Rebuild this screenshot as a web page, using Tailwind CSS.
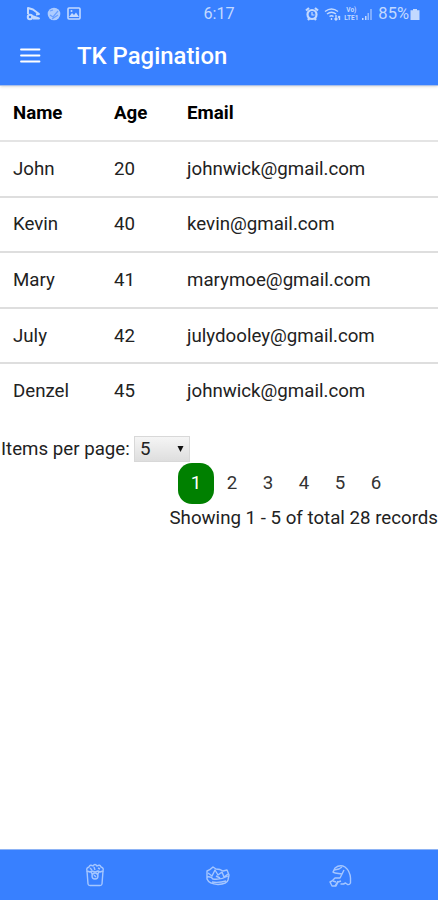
<!DOCTYPE html>
<html lang="en">
<head>
    <meta charset="UTF-8">
    <meta name="viewport" content="width=device-width, initial-scale=1.0">
    <title>TK Pagination</title>
    <script src="https://cdn.jsdelivr.net/npm/@tailwindcss/browser@4"></script>
</head>
<body class="bg-white text-[#222] font-['Roboto',sans-serif] text-[18.7px] h-screen flex flex-col overflow-hidden">

    <!-- Header -->
    <header class="h-[86px] shrink-0 bg-[#3880ff] text-white border-b border-[#a9bfe8] shadow-sm">
        <div class="h-7 flex items-center justify-between pl-[26px] pr-[18px] text-[#c3d9ff] relative">
            <div class="flex items-center gap-[6px] pb-px">
                <svg class="w-[15px] h-[15px]" viewBox="0 0 15 15" fill="none" stroke="currentColor" stroke-width="2" stroke-linejoin="round">
                    <path d="M2 8V2l5 1.500 6 4.500-3 .500M6 10l7 2.500H7"/>
                    <circle cx="4" cy="11" r="2.200"/>
                </svg>
                <svg class="w-[14px] h-[14px]" viewBox="0 0 14 14">
                    <circle cx="7" cy="7" r="6.300" fill="currentColor" opacity=".85"/>
                    <path d="M3 8l3 2 5-6M5 12l6-4M3 4l3-1" fill="none" stroke="#6a9fff" stroke-width="1.200"/>
                </svg>
                <svg class="w-[14px] h-[13px]" viewBox="0 0 14 13">
                    <rect x="1" y="1" width="12" height="11" rx="1" fill="none" stroke="currentColor" stroke-width="1.600"/>
                    <path d="M2 10l3-4 2 2 2-2.500 3 4.500z" fill="currentColor"/>
                    <circle cx="4.500" cy="4" r="1" fill="currentColor"/>
                </svg>
            </div>
            <span class="absolute left-[203.5px] top-[3px] text-[16.200px] leading-[22px]">6:17</span>
            <div class="flex items-center">
                <svg class="w-[14px] h-[14px] mr-[5px]" viewBox="0 0 14 14" fill="none" stroke="currentColor">
                    <circle cx="7" cy="7.500" r="4.500" stroke-width="2.200"/>
                    <path d="M1 3.500L4 1M10 1l3 2.500M3 13l1.500-2M11 13l-1.500-2" stroke-width="2.200"/>
                    <path d="M7 5v3h2.500" stroke-width="1.200"/>
                </svg>
                <svg class="w-[17px] h-[14px] mr-[2px]" viewBox="0 0 17 14" fill="none" stroke="currentColor" stroke-width="1.400">
                    <path d="M1 4.500q6.500-5 13 0M3 7q4.500-3.500 9 0M5.500 9.500q2-1.500 4 0"/>
                    <path d="M7.500 11v2M12 8v5M10.500 11.500L12 13l1.500-1.500M15.500 13V9M14 10.500L15.500 9"/>
                </svg>
                <span class="w-[16px] h-[16px] mr-[2px] flex flex-col items-center text-[6.500px] leading-[8px] font-bold"><span>Vo)</span><span>LTE1</span></span>
                <svg class="w-[12px] h-[13px] mr-[5px]" viewBox="0 0 12 13" fill="currentColor">
                    <rect x="1" y="10" width="1.500" height="2"/>
                    <rect x="4" y="8" width="1.500" height="4"/>
                    <rect x="6.500" y="5" width="1.500" height="7" opacity=".65"/>
                    <rect x="9" y="1" width="2" height="11" opacity=".5"/>
                </svg>
                <span class="text-[16.500px] leading-[22px] mr-px">85%</span>
                <svg class="w-[10px] h-[13px]" viewBox="0 0 10 13" fill="currentColor">
                    <path d="M3 1h4v1.200h2.500V12h-9V2.200H3z"/>
                </svg>
            </div>
        </div>
        <div class="h-[55px] flex items-center pl-5">
            <svg class="w-[21px] h-[15px] mr-[36px]" viewBox="0 0 21 15" stroke="currentColor" stroke-width="1.800" stroke-linecap="round">
                <path d="M1 1.500h18.500M1 7.500h18.500M1 13.500h18.500"/>
            </svg>
            <h1 class="text-[23.900px] leading-[28px] font-medium">TK Pagination</h1>
        </div>
    </header>

    <!-- Users -->
    <main class="grow">
        <table class="w-full table-fixed border-collapse">
            <colgroup>
                <col class="w-[101px]">
                <col class="w-[73px]">
                <col>
            </colgroup>
            <thead>
                <tr class="h-[55px] border-b-2 border-[#e4e4e4] text-left text-black">
                    <th class="pl-[13px] font-bold">Name</th>
                    <th class="pl-[13px] font-bold">Age</th>
                    <th class="pl-[13px] font-bold">Email</th>
                </tr>
            </thead>
            <tbody>
                <tr class="h-[55.600px] border-b-2 border-[#dedede]">
                    <td class="pl-[13px]">John</td>
                    <td class="pl-[13px]">20</td>
                    <td class="pl-[13px]">johnwick@gmail.com</td>
                </tr>
                <tr class="h-[55.600px] border-b-2 border-[#dedede]">
                    <td class="pl-[13px]">Kevin</td>
                    <td class="pl-[13px]">40</td>
                    <td class="pl-[13px]">kevin@gmail.com</td>
                </tr>
                <tr class="h-[55.600px] border-b-2 border-[#dedede]">
                    <td class="pl-[13px]">Mary</td>
                    <td class="pl-[13px]">41</td>
                    <td class="pl-[13px]">marymoe@gmail.com</td>
                </tr>
                <tr class="h-[55.600px] border-b-2 border-[#dedede]">
                    <td class="pl-[13px] pt-px">July</td>
                    <td class="pl-[13px] pt-px">42</td>
                    <td class="pl-[13px] pt-px">julydooley@gmail.com</td>
                </tr>
                <tr class="h-[55.600px]">
                    <td class="pl-[13px] pb-px">Denzel</td>
                    <td class="pl-[13px] pb-px">45</td>
                    <td class="pl-[13px] pb-px">johnwick@gmail.com</td>
                </tr>
            </tbody>
        </table>

        <!-- Pagination -->
        <div class="mt-[17px] flex items-center h-[27px]">
            <span class="w-[134px] pl-px whitespace-nowrap">Items per page:</span>
            <button class="w-[56px] h-[26px] pl-[5px] pr-[5px] flex items-center justify-between border border-[#d8d8d8] bg-linear-to-b from-[#f5f5f5] to-[#dedede]">
                <span>5</span>
                <svg class="w-[7px] h-[6px]" viewBox="0 0 7 6" fill="#111"><path d="M.500 0h6L3.500 6z"/></svg>
            </button>
        </div>
        <ul class="flex pl-[178px] text-[#333]">
            <li class="w-9 h-[41px] flex items-center justify-center rounded-[14px] bg-[#008000] text-white">1</li>
            <li class="w-9 h-[41px] flex items-center justify-center">2</li>
            <li class="w-9 h-[41px] flex items-center justify-center">3</li>
            <li class="w-9 h-[41px] flex items-center justify-center">4</li>
            <li class="w-9 h-[41px] flex items-center justify-center">5</li>
            <li class="w-9 h-[41px] flex items-center justify-center">6</li>
        </ul>
        <p class="text-right leading-[28px] whitespace-nowrap">Showing 1 - 5 of total 28 records</p>
    </main>

    <!-- Tabs -->
    <footer class="h-[51px] shrink-0 bg-[#3880ff] border-t border-[#8db3f5] text-[#a5c6ff] flex items-center pl-[33px] pr-[36px]">
        <div class="flex-1 flex justify-center">
            <svg class="w-[20px] h-[24px]" viewBox="0 0 20 24" fill="none" stroke="currentColor" stroke-width="1.400" stroke-linejoin="round">
                <path d="M2 8l1 13q.2 1.500 2 1.500h10q1.800 0 2-1.500L18 8"/>
                <path d="M2 8q-1-3 2-4 1-3 4-1 2-3 4 0 3-2 4 1 3 1 2 4l-3 1-2-1-3 1-3-1-2 1z"/>
                <path d="M5 5l2 2M9 4l1 3M13 5l2 1M6 9l2 3M14 9l-2 3"/>
                <circle cx="10" cy="13" r="3"/>
                <path d="M9 12l2 2"/>
            </svg>
        </div>
        <div class="flex-1 flex justify-center">
            <svg class="w-[26px] h-[21px] mt-px" viewBox="0 0 26 21" fill="none" stroke="currentColor" stroke-width="1.400" stroke-linejoin="round">
                <path d="M2 14L2 6q3-1 6-4l3 2q4 0 7 2l4-1 2 5-1 5q-1 4-10 4.500Q4 19 2 14z"/>
                <path d="M2 12q4-1 6 2 8 1 15-3M3 8l4 3 3-6 3 5 4-3 2 5 4-3M7 17q7 1 14-1M11 11l4 2"/>
            </svg>
        </div>
        <div class="flex-1 flex justify-center">
            <svg class="w-[23px] h-[23px]" viewBox="0 0 23 23" fill="none" stroke="currentColor" stroke-width="1.400" stroke-linejoin="round">
                <path d="M6 9L4 8l2-4q5-4 10-1 5 4 5.500 11v5q-1 2-3 1.500l-2-1.500-2 1h-3"/>
                <path d="M5 6l5-1 3-2M6 9l7 1-2 4H6l-3 3-2 1 2 4h4l2-4 3-1"/>
                <path d="M13 10l2-4M4 17l3 1M6 22l3-5"/>
            </svg>
        </div>
    </footer>

</body>
</html>
